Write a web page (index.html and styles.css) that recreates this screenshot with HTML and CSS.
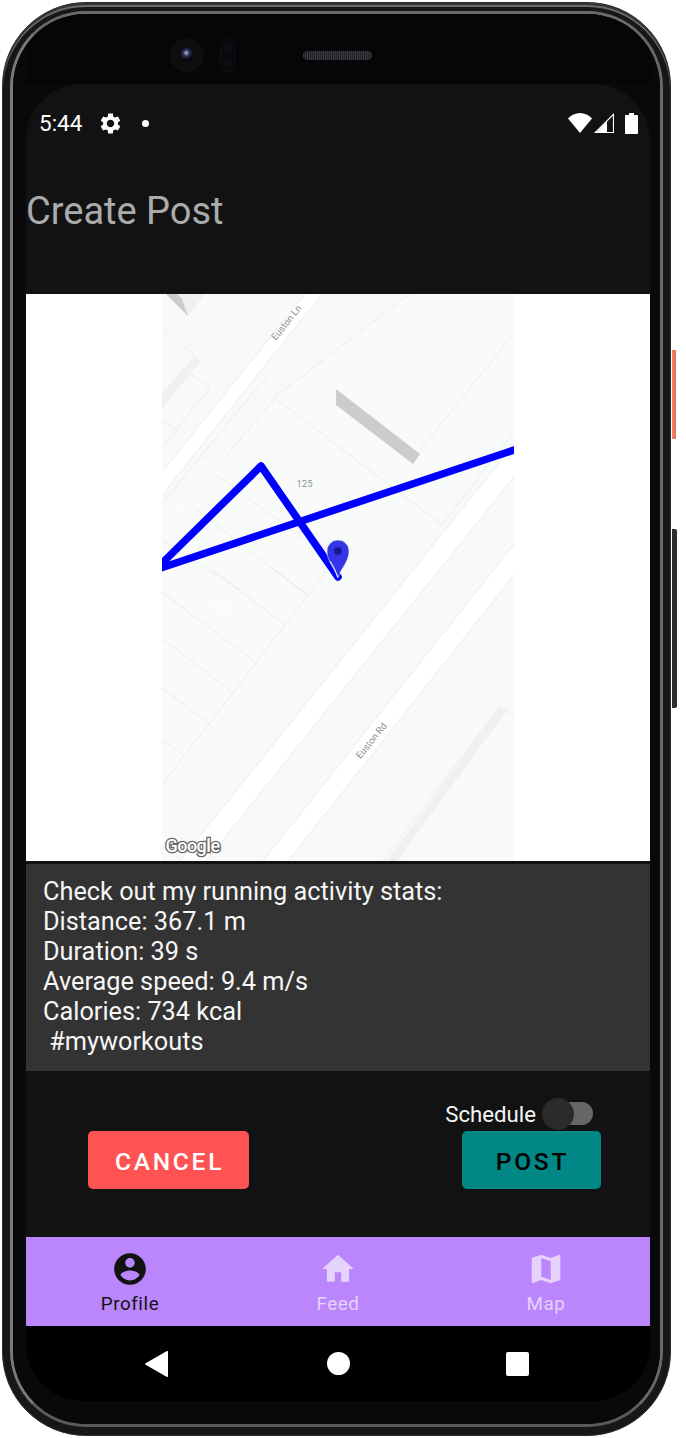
FILE: index.html
```html
<!DOCTYPE html>
<html lang="en">
<head>
<meta charset="utf-8">
<title>Create Post</title>
<link rel="stylesheet" href="styles.css">
</head>
<body>
<div class="phone">
  <div class="key key-volume-accent"></div>
  <div class="key key-power"></div>
  <div class="rim">
    <div class="bezel">
      <div class="hardware">
        <div class="camera"><span class="lens"></span></div>
        <div class="sensor"><span></span><span></span></div>
        <div class="speaker"></div>
      </div>
      <div class="screen">
        <header class="appbar">
          <div class="status">
            <span class="clock">5:44</span>
            <svg class="gear" viewBox="2.4 1.8 19.2 20.4"><path d="M19.14 12.94c.04-.3.06-.61.06-.94 0-.32-.02-.64-.07-.94l2.03-1.58c.18-.14.23-.41.12-.61l-1.92-3.32c-.12-.22-.37-.29-.59-.22l-2.39.96c-.5-.38-1.03-.7-1.62-.94l-.36-2.54c-.04-.24-.24-.41-.48-.41h-3.84c-.24 0-.43.17-.47.41l-.36 2.54c-.59.24-1.13.57-1.62.94l-2.39-.96c-.22-.08-.47 0-.59.22L2.74 8.87c-.12.21-.08.47.12.61l2.03 1.58c-.05.3-.09.63-.09.94s.02.64.07.94l-2.03 1.58c-.18.14-.23.41-.12.61l1.92 3.32c.12.22.37.29.59.22l2.39-.96c.5.38 1.03.7 1.62.94l.36 2.54c.05.24.24.41.48.41h3.84c.24 0 .44-.17.47-.41l.36-2.54c.59-.24 1.13-.56 1.62-.94l2.39.96c.22.08.47 0 .59-.22l1.92-3.32c.12-.22.07-.47-.12-.61l-2.01-1.58zM12 15.6c-1.98 0-3.6-1.62-3.6-3.6s1.62-3.6 3.6-3.6 3.6 1.62 3.6 3.6-1.62 3.6-3.6 3.6z"/></svg>
            <span class="notif-dot"></span>
            <span class="status-spacer"></span>
            <svg class="wifi" viewBox="0 0 24 20"><path d="M12 20 0 5.6C3.2 2.2 7.4 0 12 0s8.800 2.200 12 5.600z"/></svg>
            <svg class="signal" viewBox="0 0 20 20"><path d="M20 0v20H0zM18.900 2.700 2.700 18.900h16.200z"/><path d="M13 8.600 2.700 18.900H13z"/></svg>
            <svg class="battery" viewBox="0 0 13 21"><path d="M4 0h5v2h3c.6 0 1 .4 1 1v17c0 .6-.4 1-1 1H1c-.6 0-1-.4-1-1V3c0-.6.4-1 1-1h3z"/></svg>
          </div>
          <h1 class="title">Create Post</h1>
        </header>

        <div class="map">
          <svg class="map-art" viewBox="162 294 352 567">
            <rect class="m-ground" x="162" y="294" width="352" height="567"/>
            <path class="m-block" d="M275 398 410 294H514V335L442 525 323 610 162 785V540L217 467Z"/>
            <path class="m-road" d="M305 294H322L162 495V472Z"/>
            <path class="m-road" d="M514 444V477L206 861H180Z"/>
            <path class="m-road" d="M514 544V575L288 861H263Z"/>
            <path class="m-edge" d="M305 294 162 472M322 294 162 495M514 444 180 861M514 477 206 861M514 544 263 861M514 575 288 861M273 398 410 294M275 398 442 525M275 398 217 467M217 475 323 553M195 508 300 590M162 540 240 590M162 503 268 375M513 335 420 450M442 525 513 433M213 570 285 625M275 570 308 595M162 592 257 663M162 638 233 693M162 688 210 724M162 740 184 756M327 570 162 785M500 706 514 716M500 706 383 861M162 327 195 356M183 368 210 388M210 388 162 447M162 420 177 430"/>
            <path class="m-shade" d="M166 294 188 316 205 294Z"/>
            <path class="m-wedge" d="M166 294 188 316 182 299 177 294Z"/>
            <path class="m-shade" d="M162 408 200 362 195 356 162 393Z"/>
            <path class="m-shade" d="M500 706 507 710 397 861H387Z"/>
            <path class="m-wedge" d="M336 389 420 454 413 464 336 405Z"/>
            <text class="m-label" transform="translate(287 323) rotate(-51)">Euston Ln</text>
            <text class="m-label" transform="translate(372 741) rotate(-51)">Euston Rd</text>
            <text class="m-label" x="304.500" y="484">125</text>
            <text class="m-num" x="208" y="467">23</text>
            <text class="m-num" x="180" y="506">22</text>
            <text class="m-num" x="222" y="606">123</text>
            <polyline class="m-route" points="514,450 155,570 261,466 338,577"/>
            <path class="m-pin-halo" d="M338 578C335 568 327 562 327 551a11 11 0 0 1 22 0C349 562 341 568 338 578Z"/>
            <path class="m-pin-tail" d="M330 561C334 567 336 572 337.500 577"/>
            <circle class="m-pin-dot" cx="338" cy="551" r="3.700"/>
            <text class="m-google" x="192.500" y="852">Google</text>
          </svg>
        </div>

        <section class="post-text">
          <p>Check out my running activity stats:<br>Distance: 367.1 m<br>Duration: 39 s<br>Average speed: 9.4 m/s<br>Calories: 734 kcal<br>&nbsp;#myworkouts</p>
        </section>

        <section class="actions">
          <div class="schedule">
            <span class="schedule-label">Schedule</span>
            <span class="switch"><span class="switch-track"></span><span class="switch-thumb"></span></span>
          </div>
          <div class="buttons">
            <button class="btn btn-cancel">CANCEL</button>
            <button class="btn btn-post">POST</button>
          </div>
        </section>

        <nav class="tabs">
          <div class="tab tab-active">
            <svg class="tab-icon" viewBox="0 0 24 24"><path d="M12 2C6.48 2 2 6.48 2 12s4.48 10 10 10 10-4.48 10-10S17.520 2 12 2zm0 3c1.660 0 3 1.340 3 3s-1.340 3-3 3-3-1.340-3-3 1.340-3 3-3zm0 14.200c-2.500 0-4.710-1.280-6-3.220.03-1.990 4-3.080 6-3.080 1.990 0 5.970 1.090 6 3.080-1.290 1.940-3.500 3.220-6 3.220z"/></svg>
            <span class="tab-label">Profile</span>
          </div>
          <div class="tab">
            <svg class="tab-icon" viewBox="0 0 24 24"><path d="M10 20v-6h4v6h5v-8h3L12 3 2 12h3v8z"/></svg>
            <span class="tab-label">Feed</span>
          </div>
          <div class="tab">
            <svg class="tab-icon" viewBox="0 0 24 24"><path d="M20.500 3l-.16.03L15 5.100 9 3 3.360 4.900c-.21.07-.36.25-.36.48V20.500c0 .28.22.5.5.5l.16-.03L9 18.900l6 2.100 5.640-1.900c.21-.07.36-.25.36-.48V3.500c0-.28-.22-.5-.5-.5zM15 19l-6-2.110V5l6 2.110V19z"/></svg>
            <span class="tab-label">Map</span>
          </div>
        </nav>

        <div class="sysnav">
          <svg class="sys-back" viewBox="0 0 23 26"><path d="M23 1v24c0 .8-.8 1.200-1.500.8L.6 13.800c-.6-.4-.6-1.200 0-1.600L21.500.2c.7-.4 1.500 0 1.500.8z"/></svg>
          <span class="sys-home"></span>
          <span class="sys-recent"></span>
        </div>
      </div>
    </div>
  </div>
</div>
</body>
</html>
```

FILE: styles.css
```css
* { box-sizing: border-box; }

html, body {
  margin: 0;
  padding: 0;
  background: #fff;
}

body {
  width: 686px;
  height: 1438px;
  overflow: hidden;
  padding: 2px 0 0 2px;
  font-family: Roboto, "Liberation Sans", sans-serif;
}

.phone {
  position: relative;
  width: 669px;
  height: 1434px;
  padding: 8px 7px;
  border: 1px solid #2e2e2e;
  border-radius: 84px;
  background: #171719;
  box-shadow: inset 0 2px 0 0 #333, inset 0 4px 0 0 #6a6a6a;
}

.key {
  position: absolute;
  left: 669px;
}

.key-volume-accent {
  top: 347px;
  width: 4px;
  height: 89px;
  background: linear-gradient(90deg, #f0866c, #e96f55);
}

.key-power {
  top: 526px;
  width: 5px;
  height: 179px;
  background: #2e2e2e;
  border-radius: 0 2px 2px 0;
}

.rim {
  height: 100%;
  border-style: solid;
  border-width: 3px;
  border-color: #6a6a6c #68686a #5a5a5c #7a7a7c;
  border-radius: 76px;
  background: #0a0a0c;
  overflow: hidden;
}

.bezel {
  height: 100%;
  padding: 0 10px 23px 13px;
  background: #09090b;
}

.hardware {
  display: flex;
  align-items: center;
  height: 70px;
  padding: 12px 0 0 144px;
  background: #060608;
}

.camera {
  display: flex;
  align-items: center;
  justify-content: center;
  width: 34px;
  height: 34px;
  border-radius: 50%;
  background: #0e0e11;
}

.lens {
  width: 14px;
  height: 14px;
  border-radius: 50%;
  background: radial-gradient(circle at 45% 35%, #9a9aa8 0 1px, #2a3358 3px, #08090f 7px);
}

.sensor {
  display: flex;
  flex-direction: column;
  align-items: center;
  justify-content: space-around;
  width: 15px;
  height: 33px;
  margin-left: 16px;
  border: 1px solid #121216;
  border-radius: 8px;
  background: #09090c;
}

.sensor span {
  width: 9px;
  height: 9px;
  border-radius: 50%;
  background: #0e0e12;
}

.speaker {
  width: 69px;
  height: 9px;
  margin-left: 68px;
  border-radius: 5px;
  background: repeating-linear-gradient(90deg, #38383c 0 1px, #222226 1px 2px);
}

.screen {
  height: 1317px;
  border-radius: 56px;
  background: #121212;
  overflow: hidden;
}

.appbar {
  height: 210px;
  padding-top: 26px;
}

.status {
  display: flex;
  align-items: center;
  height: 26px;
  padding: 0 12px 0 13px;
}

.clock {
  width: 61px;
  font-size: 22.500px;
  color: #fff;
}

.gear {
  width: 21px;
  height: 21px;
  fill: #fff;
}

.notif-dot {
  width: 7px;
  height: 7px;
  margin-left: 21px;
  border-radius: 50%;
  background: #fff;
}

.status-spacer { flex: 1; }

.wifi {
  width: 24px;
  height: 20px;
  fill: #fff;
}

.signal {
  width: 20px;
  height: 20px;
  margin-left: 2px;
  fill: #fff;
  fill-rule: evenodd;
}

.battery {
  width: 13px;
  height: 21px;
  margin-left: 11px;
  fill: #fff;
}

.title {
  margin: 53px 0 0 0;
  font-size: 38px;
  font-weight: 400;
  line-height: 44px;
  color: #ababab;
}

.map {
  display: flex;
  justify-content: center;
  height: 567px;
  margin-bottom: 3px;
  background: #fff;
}

.map-art {
  display: block;
  width: 352px;
  height: 567px;
}

.m-ground { fill: #f8f9fb; }
.m-block { fill: #f9fafa; }
.m-road { fill: #fff; }
.m-edge { fill: none; stroke: #e6e8ea; stroke-width: .8; }
.m-shade { fill: #eff0ef; }
.m-wedge { fill: #cccdcb; }

.m-label {
  font-size: 9.500px;
  fill: #8b8f93;
  text-anchor: middle;
  dominant-baseline: middle;
}

.m-num {
  font-size: 11px;
  fill: #fff;
  text-anchor: middle;
  dominant-baseline: middle;
}

.m-route {
  fill: none;
  stroke: #0000ff;
  stroke-width: 7.500;
  stroke-linejoin: round;
  stroke-linecap: round;
}

.m-pin-halo { fill: #3535e8; stroke: #fff; stroke-width: .5; }
.m-pin-tail { fill: none; stroke: #fff; stroke-width: 1; }
.m-pin-dot { fill: #15158a; }

.m-google {
  font-size: 18px;
  font-weight: 500;
  letter-spacing: -.5px;
  fill: #fff;
  stroke: #666;
  stroke-width: 2.600px;
  paint-order: stroke;
  text-anchor: middle;
}

.post-text {
  height: 207px;
  padding: 13px 17px 0;
  background: #333;
}

.post-text p {
  margin: 0;
  font-size: 25.300px;
  line-height: 30px;
  color: #f6f6f6;
}

.actions {
  height: 166px;
  padding-top: 27px;
}

.schedule {
  display: flex;
  align-items: center;
  justify-content: flex-end;
  gap: 6px;
  height: 32px;
  padding-right: 57px;
}

.schedule-label {
  font-size: 22.200px;
  color: #f6f6f6;
}

.switch {
  position: relative;
  display: block;
  width: 51px;
  height: 32px;
}

.switch-track {
  position: absolute;
  top: 4px;
  right: 0;
  width: 38px;
  height: 23px;
  border-radius: 12px;
  background: #666;
}

.switch-thumb {
  position: absolute;
  top: 0;
  left: 0;
  width: 32px;
  height: 32px;
  border-radius: 50%;
  background: #2b2b2b;
}

.buttons {
  display: flex;
  justify-content: space-between;
  margin-top: 1px;
  padding: 0 49px 0 62px;
}

.btn {
  height: 58px;
  padding: 3px 0 0 2px;
  border: 0;
  border-radius: 5px;
  font-family: inherit;
  font-size: 24.600px;
  font-weight: 500;
  letter-spacing: 2.700px;
}

.btn-cancel {
  width: 161px;
  background: #ff5252;
  color: #fff;
}

.btn-post {
  width: 139px;
  background: #018786;
  color: #000;
}

.tabs {
  display: flex;
  height: 89px;
  background: #bb86fc;
}

.tab {
  flex: 1;
  display: flex;
  flex-direction: column;
  align-items: center;
  padding-top: 13px;
  color: #e5d2fd;
  fill: #e5d2fd;
}

.tab-active {
  color: #121212;
  fill: #121212;
}

.tab-icon {
  display: block;
  width: 38px;
  height: 38px;
}

.tab-label {
  margin-top: 4px;
  font-size: 18.800px;
  line-height: 24px;
  letter-spacing: .6px;
}

.sysnav {
  display: flex;
  align-items: center;
  height: 75px;
  padding: 0 0 0 119px;
  background: #000;
}

.sys-back {
  width: 23px;
  height: 26px;
  fill: #fff;
}

.sys-home {
  width: 23px;
  height: 23px;
  margin-left: 159px;
  border-radius: 50%;
  background: #fff;
}

.sys-recent {
  width: 23px;
  height: 24px;
  margin-left: 156px;
  border-radius: 2px;
  background: #fff;
}
```
